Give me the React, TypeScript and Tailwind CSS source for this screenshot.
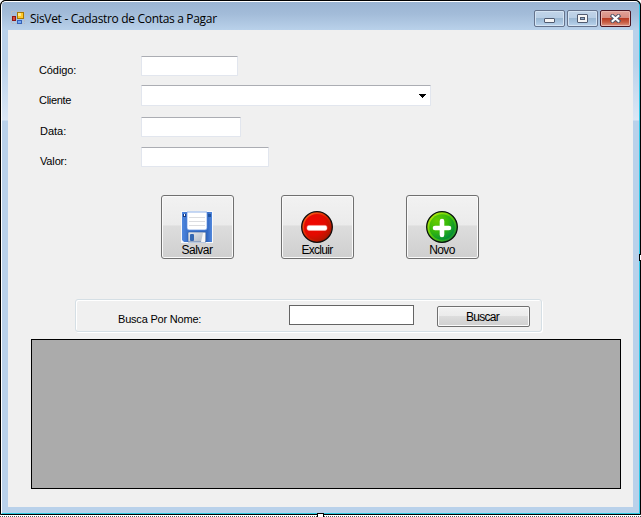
import type { ReactNode } from 'react';

const labelFont = "font-['Liberation_Sans',Arial,sans-serif] text-[11px] leading-[13px] text-black whitespace-nowrap";

function AppIcon() {
  return (
    <svg width="14" height="14" viewBox="0 0 14 14" shapeRendering="crispEdges" className="shrink-0">
      <rect x="0.5" y="0.5" width="13" height="12" fill="none" stroke="#b8bcc4" strokeDasharray="2 1" />
      <rect x="6" y="1" width="7" height="7" fill="#a87800" />
      <rect x="7" y="2" width="5" height="5" fill="#ffc928" />
      <rect x="7" y="2" width="3" height="3" fill="#ffe889" />
      <rect x="1" y="5" width="4" height="5" fill="#8f1717" />
      <rect x="2" y="6" width="2" height="3" fill="#d64a38" />
      <rect x="6" y="9" width="5" height="4" fill="#3562b8" />
      <rect x="7" y="10" width="3" height="2" fill="#75a9f4" />
    </svg>
  );
}

function CaptionButton({ close, label, children }: { close?: boolean; label: string; children: ReactNode }) {
  const tone = close
    ? 'border-[#4b1420] bg-[linear-gradient(#e1a299_0%,#d88c80_46%,#b93c25_50%,#c85d43_75%,#dc9785_100%)] shadow-[inset_0_0_0_1px_#e9b5ad]'
    : 'border-[#65738c] bg-[linear-gradient(#c1d4e8_0%,#b8cee5_46%,#9bb8d3_50%,#a8c4df_75%,#bdd5ed_100%)] shadow-[inset_0_0_0_1px_#d5e4f3]';
  return (
    <button aria-label={label} className={`flex h-[17px] w-[31px] items-center justify-center rounded-[2px] border ${tone}`}>
      {children}
    </button>
  );
}

function Field({ label, rowClass, labelClass, children }: { label: string; rowClass: string; labelClass: string; children: ReactNode }) {
  return (
    <div className={`flex items-start ${rowClass}`}>
      <label className={`${labelFont} ${labelClass} w-[102px] shrink-0`}>{label}</label>
      {children}
    </div>
  );
}

const boxClass = 'rounded-[1px] border border-[#e2e6ee] border-t-[#abadb3] bg-white outline-none';

function ActionButton({ label, labelClass, children }: { label: string; labelClass: string; children: ReactNode }) {
  return (
    <button className="flex h-[64px] w-[73px] flex-col items-center rounded-[3px] border border-[#707070] bg-[linear-gradient(#f2f2f2_0%,#ebebeb_47%,#dddddd_48%,#cfcfcf_100%)] pr-px pt-[15px] shadow-[inset_0_0_0_1px_#fafafa]">
      {children}
      <span className={`font-['Liberation_Sans',Arial,sans-serif] text-[12px] leading-[14px] text-black ${labelClass}`}>{label}</span>
    </button>
  );
}

function SaveIcon() {
  return (
    <svg width="32" height="32" viewBox="0 0 32 32" className="shrink-0">
      <defs>
        <linearGradient id="diskBody" x1="0" x2="1">
          <stop offset="0" stopColor="#5088df" />
          <stop offset="0.15" stopColor="#3f76cf" />
          <stop offset="0.85" stopColor="#3269c4" />
          <stop offset="1" stopColor="#5288dc" />
        </linearGradient>
        <linearGradient id="shutter" x1="0" x2="1" y2="1">
          <stop stopColor="#e8ebef" />
          <stop offset="1" stopColor="#adb4bf" />
        </linearGradient>
      </defs>
      <rect width="32" height="32" fill="#f8f9fb" />
      <path d="M1 1h30v30H3l-2-2z" fill="url(#diskBody)" />
      <path d="M6 1h20v16q0 2-2 2H8q-2 0-2-2z" fill="#fff" stroke="#5f91df" strokeWidth=".7" />
      <path d="M8 6.5h16M8 10.5h16M8 14.5h16" stroke="#dcdde0" />
      <rect x="2" y="3" width="3" height="3" fill="#183b84" />
      <rect x="3" y="3" width="1" height="2" fill="#fff" />
      <rect x="27" y="3" width="3" height="3" fill="#20529e" />
      <path d="M7 31v-9q0-1 1-1h16q1 0 1 1v9z" fill="url(#shutter)" stroke="#28579f" strokeWidth=".6" />
      <rect x="9" y="23" width="4" height="7" rx="1" fill="#3467b2" />
      <path d="M22 22h2v9h-4z" fill="#f7f7f8" />
    </svg>
  );
}

function DeleteIcon() {
  return (
    <svg width="32" height="32" viewBox="0 0 32 32" className="shrink-0">
      <defs>
        <radialGradient id="redBall" cx="0.35" cy="0.35" r="0.7">
          <stop offset="0" stopColor="#f10600" />
          <stop offset="0.65" stopColor="#e30b00" />
          <stop offset="1" stopColor="#b91500" />
        </radialGradient>
        <linearGradient id="redRim" x1="0" y1="0" x2="1" y2="1">
          <stop stopColor="#ff7020" />
          <stop offset="0.5" stopColor="#dd2400" />
          <stop offset="1" stopColor="#8d0d00" />
        </linearGradient>
      </defs>
      <circle cx="16" cy="16" r="15.3" fill="url(#redRim)" stroke="#120c0c" strokeWidth="1.3" />
      <circle cx="16" cy="16" r="13" fill="url(#redBall)" />
      <rect x="6" y="14.4" width="20" height="5" rx="2" fill="#fff" stroke="#ffb2a9" strokeWidth=".5" />
    </svg>
  );
}

function AddIcon() {
  return (
    <svg width="32" height="32" viewBox="0 0 32 32" className="shrink-0">
      <defs>
        <radialGradient id="greenBall" cx="0.3" cy="0.25" r="0.82">
          <stop offset="0" stopColor="#68cc00" />
          <stop offset="0.55" stopColor="#35b80c" />
          <stop offset="1" stopColor="#008c3b" />
        </radialGradient>
        <linearGradient id="greenRim" x1="0" y1="0" x2="1" y2="1">
          <stop stopColor="#d1f30b" />
          <stop offset="0.5" stopColor="#54c90c" />
          <stop offset="1" stopColor="#00803c" />
        </linearGradient>
      </defs>
      <circle cx="16" cy="16" r="15.3" fill="url(#greenRim)" stroke="#06130a" strokeWidth="1.3" />
      <circle cx="16" cy="16" r="12.7" fill="url(#greenBall)" />
      <path d="M16 10v14M9 17h14" stroke="#fff" strokeWidth="4.6" strokeLinecap="round" />
    </svg>
  );
}

export default function App() {
  return (
    <div className="relative h-[517px] w-[641px] overflow-hidden bg-white">
      <div className="h-[515px] w-[641px] rounded-t-[5px] border border-black bg-black">
        <div className="h-[513px] rounded-t-[5px] border border-t-white border-l-white border-r-[#2fc8e8] border-b-[#28c6df] bg-[#bad2eb]">
          <div className="flex h-[511px] flex-col rounded-t-[4px] bg-[linear-gradient(#9ab4d2_0px,#a3bcd9_12px,#b9d1ea_28px,#b9d1ea_60px,#dbe7f5_118px,#b9d1ea_119px)] px-[6px]">
            <header className="flex h-7 shrink-0 items-start">
              <div className="flex pl-[3px] pt-[9px]">
                <AppIcon />
              </div>
              <h1 className="ml-[5px] mt-[9px] w-[400px] whitespace-nowrap font-['Open_Sans','Noto_Sans',sans-serif] text-[12px] leading-4 tracking-[-0.32px] text-black">SisVet - Cadastro de Contas a Pagar</h1>
              <div className="ml-auto mr-[2px] flex gap-[2px] pt-2">
                <CaptionButton label="Minimizar">
                  <svg width="11" height="5" viewBox="0 0 11 5" className="mt-[4px]"><rect x=".5" y=".5" width="10" height="4" rx=".5" fill="#f5f5f5" stroke="#505b70" /></svg>
                </CaptionButton>
                <CaptionButton label="Maximizar">
                  <svg width="11" height="9" viewBox="0 0 11 9"><rect x=".5" y=".5" width="10" height="8" rx=".5" fill="#f5f5f5" stroke="#505b70" /><rect x="3.5" y="3.5" width="4" height="2" fill="#8fabc9" stroke="#505b70" /></svg>
                </CaptionButton>
                <CaptionButton close label="Fechar">
                  <svg width="11" height="9" viewBox="0 0 11 9"><path d="M2.6 2 8.4 7M8.4 2 2.6 7" stroke="#505568" strokeWidth="4" strokeLinecap="square" /><path d="M2.6 2 8.4 7M8.4 2 2.6 7" stroke="#fff" strokeWidth="2.1" strokeLinecap="square" /></svg>
                </CaptionButton>
              </div>
            </header>

            <main className="flex h-[477px] w-[625px] shrink-0 flex-col bg-[#f0f0f0] pl-[23px]">
              <form className="flex flex-col pl-2 pt-[26px]">
                <Field label="Código:" rowClass="h-[29px]" labelClass="pt-[8px] tracking-[-0.1px]">
                  <input aria-label="Código" className={`${boxClass} h-[20px] w-[97px]`} />
                </Field>
                <Field label="Cliente" rowClass="h-[32px]" labelClass="pt-[9px] tracking-[-0.3px]">
                  <button type="button" aria-label="Cliente" className={`${boxClass} flex h-[21px] w-[290px] items-center justify-end pr-[4px]`}>
                    <svg width="7" height="4" viewBox="0 0 7 4" shapeRendering="crispEdges"><path d="M0 0h7L3.5 4z" /></svg>
                  </button>
                </Field>
                <Field label="Data:" rowClass="h-[30px]" labelClass="pt-[8px] pl-px">
                  <input aria-label="Data" className={`${boxClass} h-[20px] w-[100px]`} />
                </Field>
                <Field label="Valor:" rowClass="h-[48px]" labelClass="pt-[8px] pl-px tracking-[-0.15px]">
                  <input aria-label="Valor" className={`${boxClass} h-[20px] w-[128px]`} />
                </Field>
              </form>

              <div className="flex h-[104px] shrink-0 pl-[130px]">
                <ActionButton label="Salvar" labelClass="tracking-[-0.5px]"><SaveIcon /></ActionButton>
                <div className="ml-[47px]"><ActionButton label="Excluir" labelClass="tracking-[-0.7px]"><DeleteIcon /></ActionButton></div>
                <div className="ml-[52px]"><ActionButton label="Novo" labelClass="tracking-[-0.6px]"><AddIcon /></ActionButton></div>
              </div>

              <section className="ml-[44px] flex h-[33px] w-[467px] shrink-0 items-start rounded-[3px] border border-[#d5dfe5] pl-[42px] shadow-[inset_1px_1px_0_#fff,1px_1px_0_#fff]">
                <label className={`${labelFont} mt-[13px] w-[171px] tracking-[-0.2px]`}>Busca Por Nome:</label>
                <input aria-label="Busca por nome" className="mt-[5px] h-[20px] w-[125px] border border-[#646464] bg-white outline-none" />
                <button className="ml-[23px] mt-[6px] flex h-[21px] w-[93px] items-center justify-center rounded-[2px] border border-[#707070] bg-[linear-gradient(#f2f2f2_0%,#ebebeb_47%,#dddddd_48%,#cfcfcf_100%)] pr-[2px] font-['Liberation_Sans',Arial,sans-serif] text-[12px] leading-[14px] tracking-[-0.75px] text-black shadow-[inset_0_0_0_1px_#fafafa]">Buscar</button>
              </section>

              <div className="mt-[7px] h-[150px] w-[590px] shrink-0 border border-black bg-[#ababab]" />
            </main>
          </div>
        </div>
      </div>
      <div className="flex h-[2px] flex-col justify-end bg-white">
        <div className="h-px bg-[repeating-linear-gradient(90deg,#555_0px,#555_1px,#fff_1px,#fff_2px)]" />
      </div>
      <div className="absolute left-[317px] top-[513px] h-[4px] w-[7px] border border-b-0 border-black bg-white" />
      <div className="absolute left-[639px] top-[254px] h-[7px] w-[2px] border border-r-0 border-black bg-white" />
    </div>
  );
}
